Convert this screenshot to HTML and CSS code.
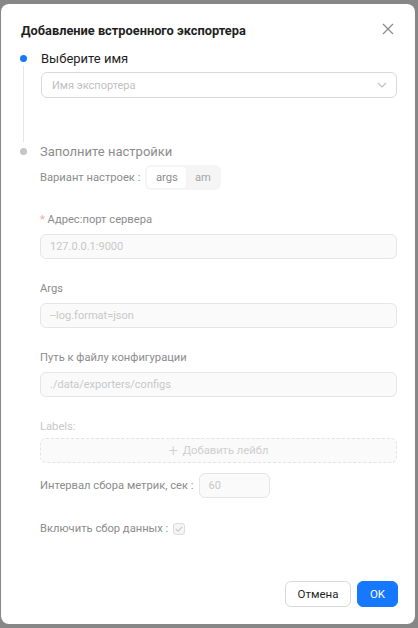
FILE: index.html
```html
<!DOCTYPE html>
<html lang="ru">
<head>
<meta charset="utf-8">
<link rel="stylesheet" href="styles.css">
</head>
<body>
<div class="modal">
  <div class="head">
    <div class="title">Добавление встроенного экспортера</div>
    <svg class="close" width="12" height="12" viewBox="0 0 12 12"><path d="M1 1L11 11M11 1L1 11" stroke="#8c8c8c" stroke-width="1.3" fill="none"/></svg>
  </div>
  <div class="steps">
    <div class="step">
      <div class="rail"><span class="dot active"></span><span class="line"></span></div>
      <div class="body first">
        <div class="step-title">Выберите имя</div>
        <div class="select">
          <span>Имя экспортера</span>
          <svg width="10" height="6" viewBox="0 0 10 6"><path d="M1 1L5 5L9 1" stroke="#bfbfbf" stroke-width="1.1" fill="none"/></svg>
        </div>
      </div>
    </div>
    <div class="step">
      <div class="rail"><span class="dot"></span></div>
      <div class="body">
        <div class="step-title muted">Заполните настройки</div>
        <div class="inline first-row">
          <span class="lbl">Вариант настроек :</span>
          <div class="seg"><span class="seg-item on">args</span><span class="seg-item">am</span></div>
        </div>
        <div class="field">
          <div class="lbl"><span class="req">*</span> Адрес:порт сервера</div>
          <div class="input">127.0.0.1:9000</div>
        </div>
        <div class="field">
          <div class="lbl">Args</div>
          <div class="input">--log.format=json</div>
        </div>
        <div class="field">
          <div class="lbl">Путь к файлу конфигурации</div>
          <div class="input">./data/exporters/configs</div>
        </div>
        <div class="field labels">
          <div class="lbl light">Labels:</div>
          <div class="dashed"><span class="plus">+</span> Добавить лейбл</div>
        </div>
        <div class="inline interval">
          <span class="lbl">Интервал сбора метрик, сек :</span>
          <div class="num">60</div>
        </div>
        <div class="inline enable">
          <span class="lbl">Включить сбор данных :</span>
          <span class="check"><svg width="8" height="6" viewBox="0 0 8 6"><path d="M0.8 3L3 5.2L7.2 0.8" stroke="#c8c8c8" stroke-width="1.1" fill="none"/></svg></span>
        </div>
      </div>
    </div>
  </div>
  <div class="footer">
    <button class="btn">Отмена</button>
    <button class="btn primary">OK</button>
  </div>
</div>
</body>
</html>
```

FILE: styles.css
```css
html, body { margin: 0; padding: 0; }
body {
  background: #878787;
  font-family: Roboto, "Noto Sans", sans-serif;
  width: 418px;
  height: 628px;
  overflow: hidden;
}
.modal {
  box-sizing: border-box;
  margin: 4px 0 0 1px;
  width: 414px;
  height: 620px;
  background: #fff;
  border-radius: 8px;
  padding: 16px 18px 17px 19px;
  display: flex;
  flex-direction: column;
}
.head {
  display: flex;
  justify-content: space-between;
  align-items: center;
  height: 20px;
}
.title {
  font-size: 12.8px;
  font-weight: 700;
  color: #1f1f1f;
  padding-left: 1px;
}
.close { margin-right: 3px; margin-top: -3px; }
.steps { margin-top: 9px; }
.step { display: flex; }
.rail {
  width: 20px;
  flex: none;
  display: flex;
  flex-direction: column;
  align-items: flex-start;
}
.dot {
  width: 7px; height: 7px;
  border-radius: 50%;
  background: #c6c6c6;
  margin-top: 6px;
}
.dot.active { background: #1677ff; }
.line {
  width: 1px;
  flex: 1;
  background: #e6e6e6;
  margin-left: 3px;
  margin-top: 4px;
}
.body { flex: 1; }
.body.first { padding-bottom: 44px; padding-left: 1px; }
.step-title {
  font-size: 13px;
  line-height: 20px;
  color: #1f1f1f;
}
.step-title.muted { color: #8c8c8c; }
.select {
  margin-top: 3px;
  height: 26px;
  box-sizing: border-box;
  border: 1px solid #d9d9d9;
  border-radius: 6px;
  display: flex;
  align-items: center;
  justify-content: space-between;
  padding: 0 9px 0 10px;
  font-size: 11px;
  color: #bfbfbf;
}
.inline { display: flex; align-items: center; }
.lbl { font-size: 11.2px; color: #8c8c8c; line-height: 20px; }
.lbl.light { color: #c8c8c8; }
.req { color: #ffa3a3; }
.first-row { margin-top: 3px; }
.seg {
  margin-left: 5px;
  background: #f5f5f5;
  border-radius: 6px;
  padding: 2px;
  display: flex;
  height: 25px;
  width: 76px;
  box-sizing: border-box;
}
.seg-item {
  font-size: 11.2px;
  color: #a6a6a6;
  display: flex;
  align-items: center;
  justify-content: center;
  border-radius: 4px;
  flex: 1;
}
.seg-item.on { background: #fff; color: #8c8c8c; flex: none; width: 39px; }
.field { margin-top: 20px; }
.field .lbl { margin-bottom: 4px; }
.input {
  height: 25px;
  box-sizing: border-box;
  border: 1px solid #e6e6e6;
  background: #fafafa;
  border-radius: 6px;
  padding: 0 9px;
  font-size: 11px;
  color: #c8c8c8;
  display: flex;
  align-items: center;
}
.labels .lbl { margin-bottom: 1px; }
.dashed {
  height: 25px;
  box-sizing: border-box;
  border: 1px dashed #e3e3e3;
  background: #fafafa;
  border-radius: 6px;
  display: flex;
  align-items: center;
  justify-content: center;
  font-size: 11.2px;
  color: #cfcfcf;
}
.plus { font-size: 16px; font-weight: 300; margin-right: 5px; line-height: 1; }
.interval { margin-top: 10px; }
.num {
  margin-left: 5px;
  width: 71px;
  height: 25px;
  box-sizing: border-box;
  border: 1px solid #e6e6e6;
  background: #fafafa;
  border-radius: 6px;
  padding: 0 9px;
  font-size: 11px;
  color: #c8c8c8;
  display: flex;
  align-items: center;
}
.enable { margin-top: 21px; }
.check {
  margin-left: 5px;
  width: 12px; height: 12px;
  box-sizing: border-box;
  border: 1px solid #dcdcdc;
  background: #f5f5f5;
  border-radius: 3px;
  display: flex;
  align-items: center;
  justify-content: center;
}
.footer {
  margin-top: auto;
  margin-right: -1px;
  display: flex;
  justify-content: flex-end;
  gap: 6px;
}
.btn {
  font-family: Roboto, "Noto Sans", sans-serif;
  height: 26px;
  box-sizing: border-box;
  border: 1px solid #d9d9d9;
  background: #fff;
  border-radius: 6px;
  font-size: 11.5px;
  color: #1f1f1f;
  padding: 0;
  width: 66px;
}
.btn.primary {
  width: 41px;
  background: #1677ff;
  border-color: #1677ff;
  color: #fff;
}
```
